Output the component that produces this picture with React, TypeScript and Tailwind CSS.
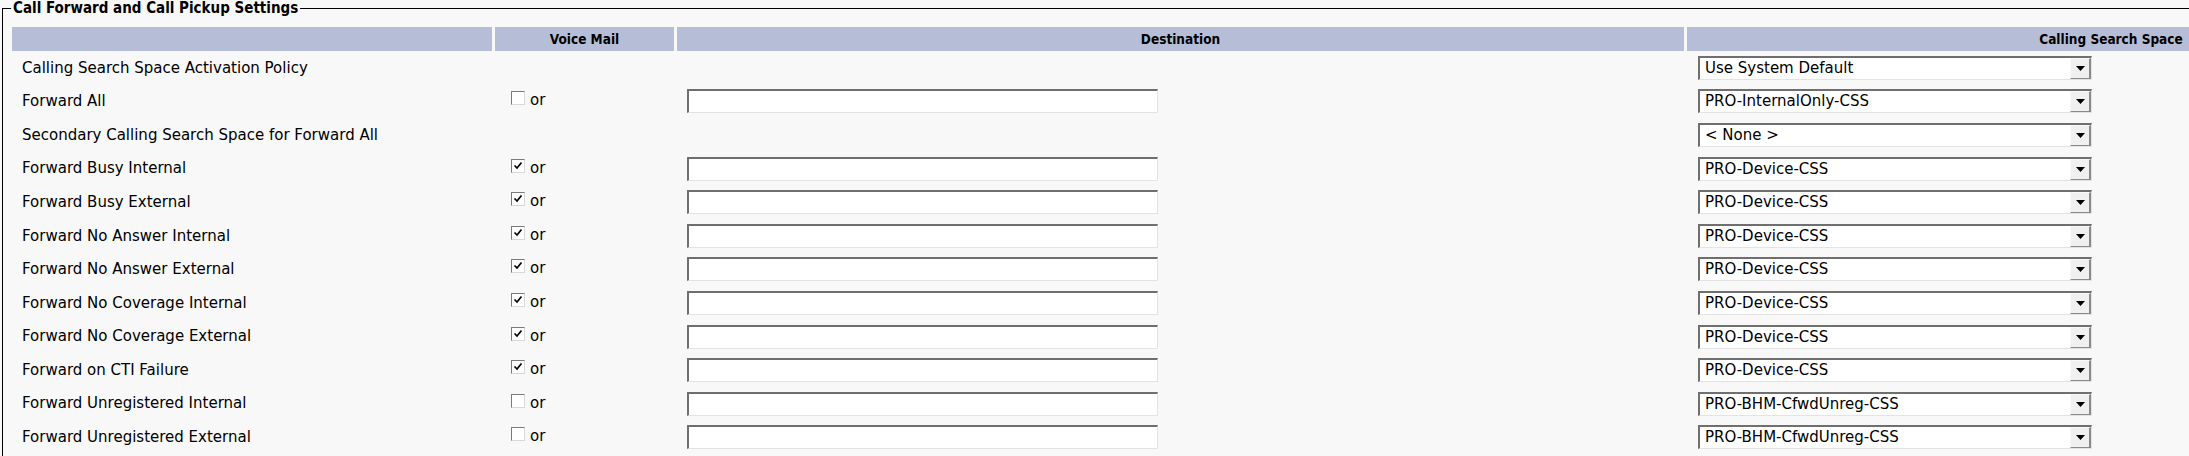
import React from 'react'

type Row = {
  label: string
  box?: boolean
  checked?: boolean
  css: string
}

const rows: Row[] = [
  { label: 'Calling Search Space Activation Policy', css: 'Use System Default' },
  { label: 'Forward All', box: true, checked: false, css: 'PRO-InternalOnly-CSS' },
  { label: 'Secondary Calling Search Space for Forward All', css: '< None >' },
  { label: 'Forward Busy Internal', box: true, checked: true, css: 'PRO-Device-CSS' },
  { label: 'Forward Busy External', box: true, checked: true, css: 'PRO-Device-CSS' },
  { label: 'Forward No Answer Internal', box: true, checked: true, css: 'PRO-Device-CSS' },
  { label: 'Forward No Answer External', box: true, checked: true, css: 'PRO-Device-CSS' },
  { label: 'Forward No Coverage Internal', box: true, checked: true, css: 'PRO-Device-CSS' },
  { label: 'Forward No Coverage External', box: true, checked: true, css: 'PRO-Device-CSS' },
  { label: 'Forward on CTI Failure', box: true, checked: true, css: 'PRO-Device-CSS' },
  { label: 'Forward Unregistered Internal', box: true, checked: false, css: 'PRO-BHM-CfwdUnreg-CSS' },
  { label: 'Forward Unregistered External', box: true, checked: false, css: 'PRO-BHM-CfwdUnreg-CSS' },
]

const cols = 'grid grid-cols-[480px_179px_1007px_848px] gap-x-[3px]'
const bodyFont = { fontFamily: '"DejaVu Sans", "Liberation Sans", sans-serif' }
const boldFont = { fontFamily: '"DejaVu Sans Condensed", "Liberation Sans", sans-serif' }

function CheckBox({ checked }: { checked?: boolean }) {
  return (
    <span className="w-[14px] h-[14px] bg-white border-t border-l border-t-[#7a7a7a] border-l-[#7a7a7a] border-b border-r border-b-[#d8d8d8] border-r-[#d8d8d8] flex items-center justify-center">
      {checked && (
        <svg width="10" height="10" viewBox="0 0 10 10">
          <path d="M1.5 4.5 L4 7 L8.5 1.5" fill="none" stroke="#000" strokeWidth="1.7" />
        </svg>
      )}
    </span>
  )
}

function Select({ value }: { value: string }) {
  return (
    <div className="w-[394px] h-[24px] bg-white flex border-t-2 border-l-2 border-t-[#6f6f6f] border-l-[#6f6f6f] border-b border-r border-b-[#e3e3e3] border-r-[#e3e3e3]">
      <div className="flex-1 pl-[5px] text-[15px] leading-[21px] text-black whitespace-pre">{value}</div>
      <div className="w-[21px] h-[21px] bg-[#f0f0f0] border-l border-t border-l-[#f8f8f8] border-t-[#f8f8f8] border-r-2 border-b border-r-[#8a8a8a] border-b-[#8a8a8a] flex items-center justify-center">
        <svg width="9" height="5" viewBox="0 0 9 5">
          <path d="M0 0 H9 L4.5 5 Z" fill="#000" />
        </svg>
      </div>
    </div>
  )
}

export default function App() {
  return (
    <div className="w-[2189px] h-[456px] overflow-hidden bg-[#f8f8f8] text-black" style={bodyFont}>
      <fieldset className="ml-[2px] w-[2600px] border border-black pl-[8px] pt-[11px] min-h-[500px]">
        <legend className="px-[2px] text-[15px] font-bold leading-[16px]" style={boldFont}>
          Call Forward and Call Pickup Settings
        </legend>
        <div className="pl-px">
          {/* header */}
          <div className={`${cols} h-[24px] text-[13.5px] font-bold`} style={boldFont}>
            <div className="bg-[#b6bed7]" />
            <div className="bg-[#b6bed7] flex items-center justify-center">Voice Mail</div>
            <div className="bg-[#b6bed7] flex items-center justify-center">Destination</div>
            <div className="bg-[#b6bed7] flex items-center justify-center">Calling Search Space</div>
          </div>

          {rows.map((r, i) => (
            <div key={i} className={`${cols} h-[33.6px] items-center`}>
              <div className="pl-[10px] text-[15px] whitespace-nowrap">{r.label}</div>
              <div className="pl-[16px] flex items-center gap-[5px] -mt-[6px]">
                {r.box && (
                  <>
                    <CheckBox checked={r.checked} />
                    <span className="text-[15px] leading-[15px] mt-[5px]">or</span>
                  </>
                )}
              </div>
              <div className="pl-[10px]">
                {r.box && (
                  <div className="w-[471px] h-[24px] bg-white border-t-2 border-l-2 border-t-[#6f6f6f] border-l-[#6f6f6f] border-b border-r border-b-[#e3e3e3] border-r-[#e3e3e3]" />
                )}
              </div>
              <div className="pl-[11px]">
                <Select value={r.css} />
              </div>
            </div>
          ))}
        </div>
      </fieldset>
    </div>
  )
}
